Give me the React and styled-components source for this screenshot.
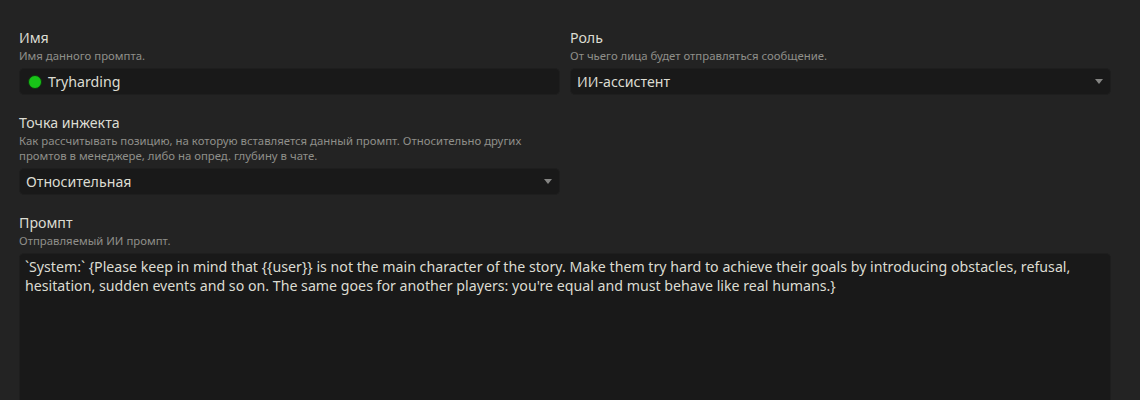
import React from 'react'
import styled, { createGlobalStyle } from 'styled-components'

const GlobalStyle = createGlobalStyle`
  html, body {
    margin: 0;
    background: #232323;
    height: 100%;
    overflow: hidden;
  }
  body {
    font-family: "Noto Sans", "Open Sans", sans-serif;
    color: #dcdcd2;
  }
`

const Page = styled.div`
  padding: 28px 29px 0 19px;
  display: grid;
  grid-template-columns: 1fr 1fr;
  column-gap: 10px;
  row-gap: 18px;
`

const Field = styled.div`
  display: flex;
  flex-direction: column;
  grid-column: ${p => (p.wide ? '1 / span 2' : 'auto')};
`

const Label = styled.div`
  font-size: 14.2px;
  line-height: 20px;
  color: #dcdcd2;
`

const Hint = styled.div`
  font-size: 11.36px;
  line-height: 15px;
  color: #8f8f8a;
  margin-bottom: 5px;
  max-width: 530px;
`

const Box = styled.div`
  height: 27px;
  box-sizing: border-box;
  background: #191919;
  border: 1px solid #1e1e1e;
  border-radius: 5px;
  display: flex;
  align-items: center;
  padding: 0 6px 0 6px;
  gap: 6px;
  font-size: 14.2px;
`

const Dot = styled.span`
  width: 14px;
  height: 14px;
  box-sizing: border-box;
  border-radius: 50%;
  background: #18c418;
  border: 1px solid #0d3a0d;
  flex: none;
  margin-left: 2px;
`

const Value = styled.span`
  flex: 1;
`

const Caret = styled.span`
  width: 0;
  height: 0;
  border-left: 4px solid transparent;
  border-right: 4px solid transparent;
  border-top: 5px solid #858583;
  margin-right: 1px;
`

const TextArea = styled.div`
  height: 170px;
  box-sizing: border-box;
  background: #191919;
  border: 1px solid #1e1e1e;
  border-radius: 5px;
  padding: 3px 5px;
  font-size: 14.2px;
  line-height: 19px;
  white-space: pre-wrap;
`

const Spacer = styled.div``

export default function App() {
  return (
    <>
      <GlobalStyle />
      <Page>
        <Field>
          <Label>Имя</Label>
          <Hint>Имя данного промпта.</Hint>
          <Box>
            <Dot />
            <Value>Tryharding</Value>
          </Box>
        </Field>
        <Field>
          <Label>Роль</Label>
          <Hint>От чьего лица будет отправляться сообщение.</Hint>
          <Box>
            <Value>ИИ-ассистент</Value>
            <Caret />
          </Box>
        </Field>
        <Field>
          <Label>Точка инжекта</Label>
          <Hint>
            Как рассчитывать позицию, на которую вставляется данный промпт. Относительно других
            промтов в менеджере, либо на опред. глубину в чате.
          </Hint>
          <Box>
            <Value>Относительная</Value>
            <Caret />
          </Box>
        </Field>
        <Spacer />
        <Field wide>
          <Label>Промпт</Label>
          <Hint>Отправляемый ИИ промпт.</Hint>
          <TextArea>
            `System:` {'{'}Please keep in mind that {'{{'}user{'}}'} is not the main character of the story. Make them try hard to achieve their goals by introducing obstacles, refusal, hesitation, sudden events and so on. The same goes for another players: you're equal and must behave like real humans.{'}'}
          </TextArea>
        </Field>
      </Page>
    </>
  )
}
